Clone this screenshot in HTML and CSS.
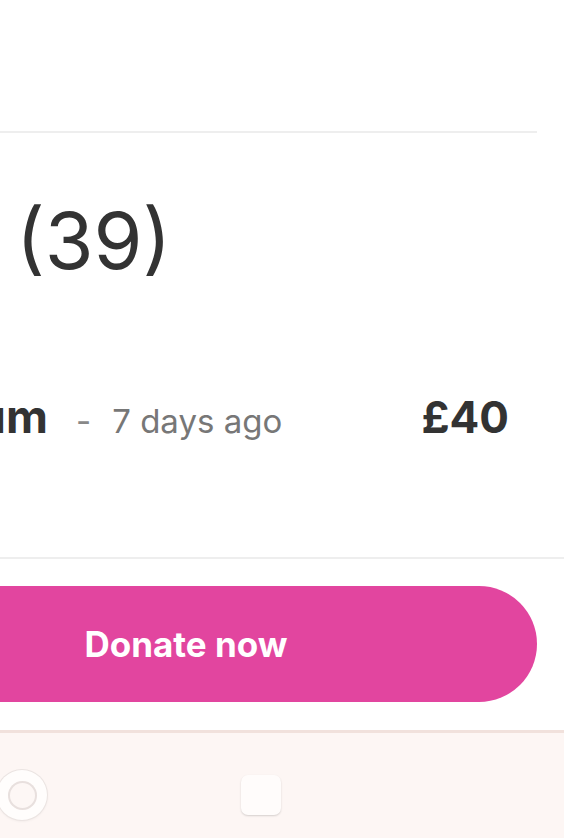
FILE: index.html
```html
<!DOCTYPE html>
<html lang="en">
<head>
    <meta charset="UTF-8">
    <meta name="viewport" content="width=device-width, initial-scale=1.0">
    <title>Donations</title>
    <link rel="stylesheet" href="styles.css">
</head>
<body>
    <div class="sheet">
        <div class="header"></div>

        <h2 class="title">
            <span class="lead">Donations&nbsp;</span>
            <span class="count">(39)</span>
        </h2>

        <div class="donation">
            <div class="who">
                <span class="lead name">Anonymous Mum</span>
                <span class="meta"><span class="dash">-</span>7 days ago</span>
            </div>
            <div class="amount">£40</div>
        </div>

        <div class="actions">
            <button class="donate-btn">Donate now</button>
        </div>
    </div>

    <nav class="sysbar">
        <div class="nav-home"><div class="nav-home-inner"></div></div>
        <div class="nav-recent"></div>
    </nav>
</body>
</html>
```

FILE: styles.css
```css
body {
    margin: 0;
    font-family: Inter, "Liberation Sans", sans-serif;
    background: #ffffff;
    color: #333333;
    overflow: hidden;
    height: 838px;
}

.sheet {
    display: flex;
    flex-direction: column;
}

.header {
    height: 131px;
    margin-right: 27px;
    border-bottom: 2px solid #eeeeee;
}

/* text starting off the left edge: lead box overflows to the left */
.lead {
    display: flex;
    justify-content: flex-end;
    white-space: nowrap;
    flex-shrink: 0;
}

.title {
    display: flex;
    margin: 68px 0 0;
    font-size: 79px;
    font-weight: 400;
    line-height: 1;
}

.title .lead {
    width: 16px;
}

.donation {
    display: flex;
    justify-content: space-between;
    align-items: baseline;
    margin-top: 113px;
    padding: 0 55px 118px 0;
    border-bottom: 2px solid #eeeeee;
    line-height: 1;
}

.who {
    display: flex;
    align-items: baseline;
}

.name {
    width: 48px;
    font-size: 46px;
    font-weight: 700;
}

.meta {
    margin-left: 28px;
    font-size: 33px;
    color: #777777;
    white-space: nowrap;
}

.dash {
    margin-right: 21px;
    color: #888888;
}

.amount {
    font-size: 44px;
    font-weight: 700;
}

.actions {
    padding: 27px 27px 28px 0;
}

.donate-btn {
    display: flex;
    align-items: center;
    justify-content: center;
    width: calc(100% + 165px);
    height: 116px;
    margin-left: -165px;
    border: none;
    border-radius: 58px;
    background: #e2459f;
    color: #ffffff;
    font-family: inherit;
    font-size: 35px;
    font-weight: 700;
}

.sysbar {
    display: flex;
    align-items: center;
    gap: 194px;
    height: 108px;
    padding-top: 19px;
    box-sizing: border-box;
    border-top: 3px solid #f1e1dc;
    background: #fdf6f4;
}

.nav-home {
    display: flex;
    align-items: center;
    justify-content: center;
    width: 50px;
    height: 50px;
    margin-left: -3px;
    border-radius: 50%;
    background: #fffdfc;
    box-shadow: 0 0 0 1px #ebe4e2, 0 1px 3px rgba(0,0,0,0.08);
}

.nav-home-inner {
    width: 29px;
    height: 29px;
    border-radius: 50%;
    background: #fdf7f5;
    box-shadow: inset 0 0 0 2px #e8e0de;
}

.nav-recent {
    width: 40px;
    height: 40px;
    border-radius: 7px;
    background: #fffcfb;
    box-shadow: 0 1px 2px rgba(0,0,0,0.16);
}
```
